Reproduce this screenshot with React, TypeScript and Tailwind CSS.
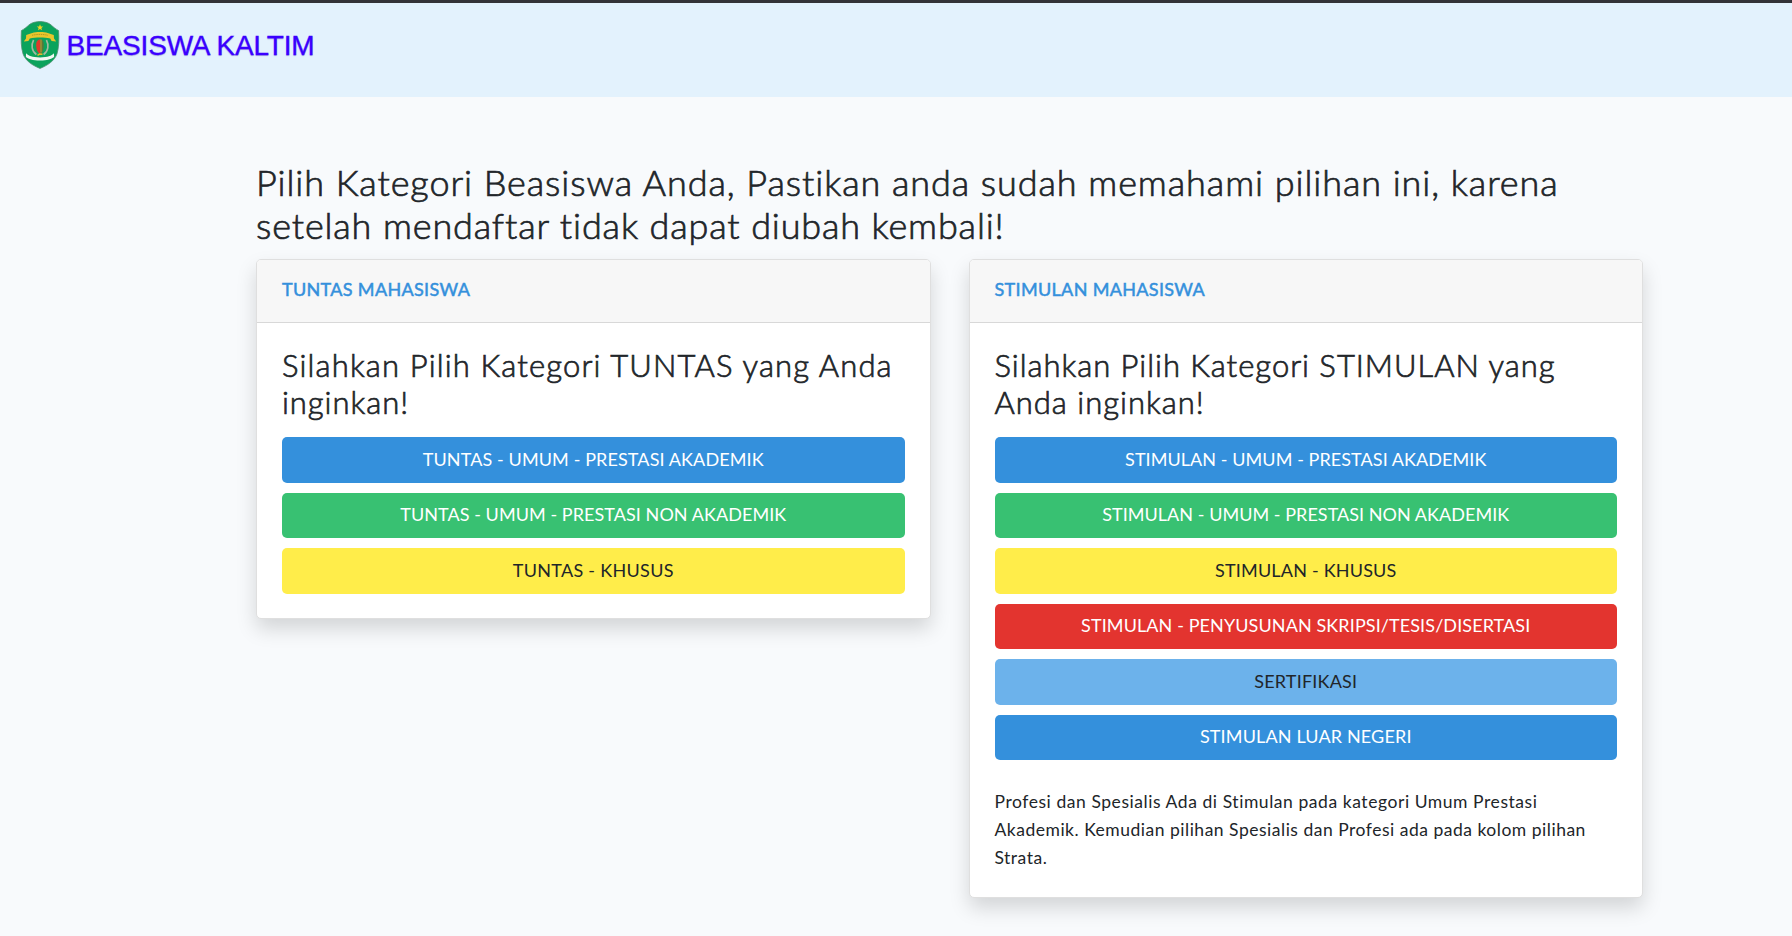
import type { ReactNode } from "react";

function Crest() {
  return (
    <svg viewBox="0 0 40 48" className="h-[48px] w-[40px] shrink-0" aria-hidden="true">
      <path
        d="M20 .6c3.400 0 8.300.7 11.600 3.800 1.900 1.800 3.900 3.400 7 5.200.5 9.500.3 17-1.600 23.200C34.600 39.900 27.500 44.400 20 47.400 12.500 44.400 5.400 39.900 3 32.800 1.100 26.600.9 19.100 1.400 9.600c3.100-1.800 5.100-3.400 7-5.200C11.700 1.300 16.600.6 20 .6z"
        fill="#0ba35c"
        stroke="#4f8f70"
        strokeWidth=".8"
      />
      <path d="M20 3.200l.9 2.200 2.300.1-1.800 1.500.6 2.300-2-1.300-2 1.300.6-2.300-1.800-1.500 2.300-.1z" fill="#f3d321" />
      <path d="M3.800 20.500l2.200-3 .2-3.600c4.200-1.200 7.300-2.900 13.800-2.900s9.600 1.700 13.800 2.900l.2 3.600 2.200 3-4.600-.5-1.400-2.400c-6-1.400-14.400-1.400-20.400 0l-1.400 2.400z" fill="#e9c52c" />
      <path d="M12 14.300c5-1.200 11-1.200 16 0" fill="none" stroke="#b59b24" strokeWidth="1" strokeDasharray="1.500 .7" />
      <path d="M13.600 19c-2.700 5-2 11 2.800 14.500M26.400 19c2.700 5 2 11-2.800 14.500" fill="none" stroke="#a5b8a0" strokeWidth="1.600" />
      <path d="M20.500 18.300c-3.700.6-4.500 3.200-4.300 7 .2 4 1.800 6.400 4.300 8z" fill="#e0392b" />
      <path d="M20.500 18.300c2.700.6 3.500 3.200 3.300 7-.2 4-1.300 6.400-3.300 8z" fill="#567a3a" />
      <path d="M21 18.500v13" stroke="#cda02c" strokeWidth=".9" />
      <path d="M17.500 34.300l2-1.200 3 .2" fill="none" stroke="#e0b92c" strokeWidth="1.500" />
      <path d="M6 32.300c2.800 2.600 6 3.900 14 4.200 8-.3 11.200-1.600 14-4.200l.1 3.700c-3 2.300-6.600 3.300-14.100 3.500-7.500-.2-11.100-1.200-14.100-3.500z" fill="#f2f7f3" />
    </svg>
  );
}

const tones = {
  blue: "bg-[#3490dc] text-white",
  green: "bg-[#38c172] text-white",
  yellow: "bg-[#ffed4a] text-[#212529]",
  red: "bg-[#e3342f] text-white",
  sky: "bg-[#6cb2eb] text-[#212529]",
};

type Option = { label: string; tone: keyof typeof tones; tracking: string };

const tuntas: Option[] = [
  { label: "TUNTAS - UMUM - PRESTASI AKADEMIK", tone: "blue", tracking: "tracking-[0.11px]" },
  { label: "TUNTAS - UMUM - PRESTASI NON AKADEMIK", tone: "green", tracking: "tracking-[0.06px]" },
  { label: "TUNTAS - KHUSUS", tone: "yellow", tracking: "tracking-[0.3px]" },
];

const stimulan: Option[] = [
  { label: "STIMULAN - UMUM - PRESTASI AKADEMIK", tone: "blue", tracking: "tracking-[0.07px]" },
  { label: "STIMULAN - UMUM - PRESTASI NON AKADEMIK", tone: "green", tracking: "tracking-[0.04px]" },
  { label: "STIMULAN - KHUSUS", tone: "yellow", tracking: "tracking-[0.2px]" },
  { label: "STIMULAN - PENYUSUNAN SKRIPSI/TESIS/DISERTASI", tone: "red", tracking: "tracking-[0.1px]" },
  { label: "SERTIFIKASI", tone: "sky", tracking: "tracking-[0.2px]" },
  { label: "STIMULAN LUAR NEGERI", tone: "blue", tracking: "tracking-[0.15px]" },
];

function Card({ title, heading, options, children }: { title: string; heading: ReactNode; options: Option[]; children?: ReactNode }) {
  return (
    <section className="w-[674.500px] rounded-[5px] border border-[#dfdfdf] bg-white shadow-[0_10px_20px_rgba(0,0,0,0.15)]">
      <header className="h-[63px] rounded-t-[4px] border-b border-[#d8d8d8] bg-[#f7f7f7] px-[25px] pt-[15px] text-[18px] leading-[29px] tracking-[0.33px] text-[#3490dc] [-webkit-text-stroke:0.5px_#3490dc]">
        {title}
      </header>
      <div className="px-[25px] pt-[24px] pb-[24.600px]">
        <h3 className="mb-[16px] text-[31px] leading-[37px] font-light [-webkit-text-stroke:0.7px_#212529]">{heading}</h3>
        <div className="flex flex-col gap-[10px]">
          {options.map((o) => (
            <button
              key={o.label}
              className={`h-[45.500px] rounded-[5px] pb-[2px] text-center text-[18px] leading-[28px] ${tones[o.tone]} ${o.tracking}`}
            >
              {o.label}
            </button>
          ))}
        </div>
        {children}
      </div>
    </section>
  );
}

export default function App() {
  return (
    <div className="min-h-[936px] bg-[#f8fafc] font-['Lato',sans-serif] text-[#212529]">
      <div className="h-[3px] bg-[#333338]" />
      <nav className="flex h-[94px] items-start bg-[#e3f2fd] pt-[18px] pl-[20px]">
        <Crest />
        <span className="mt-[8px] ml-[6.500px] font-['Liberation_Sans',sans-serif] text-[28px] leading-[34px] tracking-[-0.17px] whitespace-nowrap text-[#3a00ff] [-webkit-text-stroke:0.3px_#3a00ff] [text-shadow:0_1px_1px_rgba(60,40,160,0.35)]">
          BEASISWA KALTIM
        </span>
      </nav>
      <main className="ml-[256px] w-[1387px] pt-[64px]">
        <h2 className="mb-[13px] text-[36px] leading-[42.500px] font-light whitespace-nowrap [-webkit-text-stroke:0.7px_#212529]">
          <span className="block tracking-[0.92px]">Pilih Kategori Beasiswa Anda, Pastikan anda sudah memahami pilihan ini, karena</span>
          <span className="block tracking-[0.86px]">setelah mendaftar tidak dapat diubah kembali!</span>
        </h2>
        <div className="flex items-start justify-between">
          <Card
            title="TUNTAS MAHASISWA"
            options={tuntas}
            heading={
              <>
                <span className="block tracking-[1.150px]">Silahkan Pilih Kategori TUNTAS yang Anda</span>
                <span className="block tracking-[0.95px]">inginkan!</span>
              </>
            }
          />
          <Card
            title="STIMULAN MAHASISWA"
            options={stimulan}
            heading={
              <>
                <span className="block tracking-[0.97px]">Silahkan Pilih Kategori STIMULAN yang</span>
                <span className="block tracking-[1px]">Anda inginkan!</span>
              </>
            }
          >
            <p className="mt-[28px] text-[17.500px] leading-[28px] whitespace-nowrap">
              <span className="block tracking-[0.56px]">Profesi dan Spesialis Ada di Stimulan pada kategori Umum Prestasi</span>
              <span className="block tracking-[0.51px]">Akademik. Kemudian pilihan Spesialis dan Profesi ada pada kolom pilihan</span>
              <span className="block tracking-[0.5px]">Strata.</span>
            </p>
          </Card>
        </div>
      </main>
    </div>
  );
}
